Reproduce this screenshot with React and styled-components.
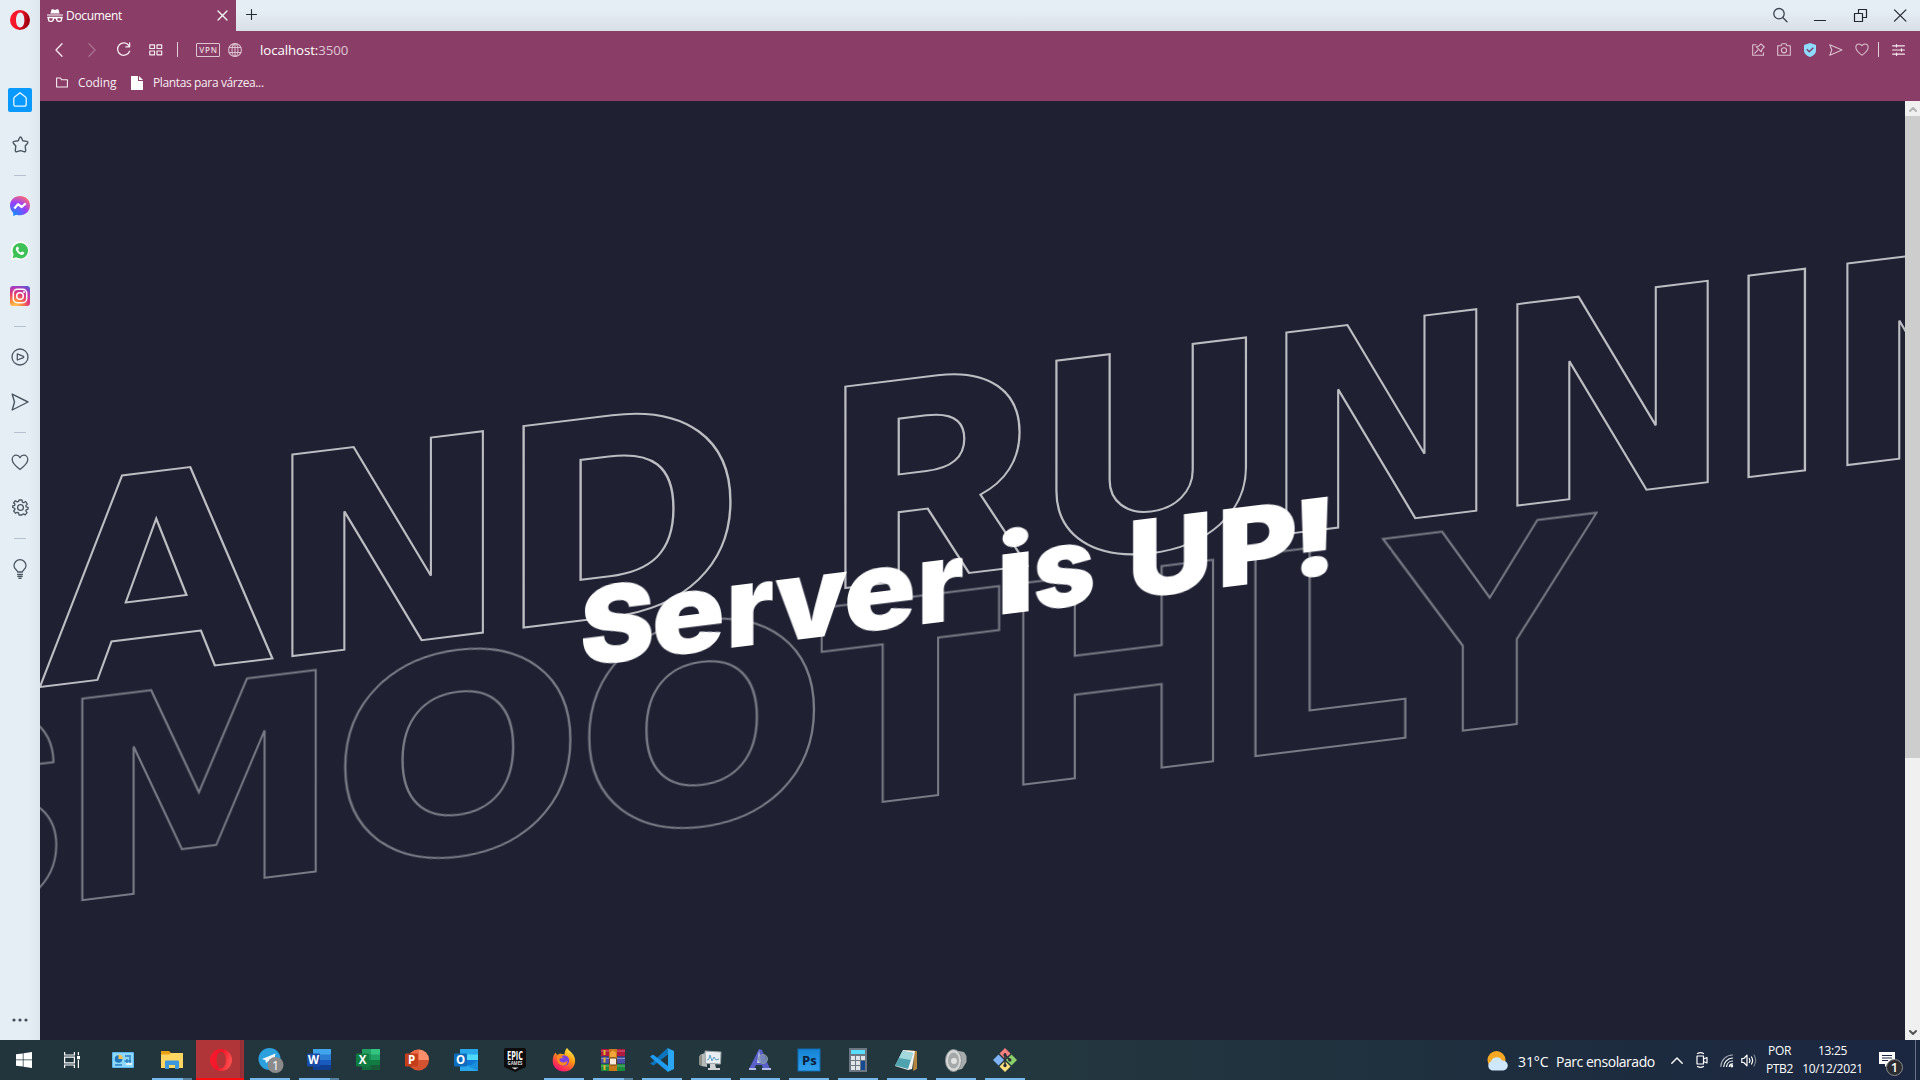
import React from "react";
import styled, { createGlobalStyle } from "styled-components";

const GlobalStyle = createGlobalStyle`
  * { box-sizing: border-box; }
  html, body { margin: 0; padding: 0; overflow: hidden; }
  body { font-family: "Open Sans", "Noto Sans", sans-serif; }
  svg { display: block; flex: none; overflow: visible; }
`;

/* ---------- shell ---------- */

const Desktop = styled.div`
  width: 1920px;
  height: 1080px;
  display: flex;
  flex-direction: column;
  overflow: hidden;
`;

const BrowserWindow = styled.div`
  height: 1040px;
  display: flex;
`;

const Sidebar = styled.nav`
  width: 40px;
  display: flex;
  flex-direction: column;
  align-items: center;
  background: linear-gradient(90deg, #e6eef5 70%, #dde5ed 100%);
`;

const SideItem = styled.div`
  width: 40px;
  height: ${(p) => p.$h || 45}px;
  display: flex;
  align-items: center;
  justify-content: center;
  flex: none;
`;

const HomeTile = styled.div`
  width: 24px;
  height: 24px;
  border-radius: 2px;
  background: #0a99ff;
  display: flex;
  align-items: center;
  justify-content: center;
`;

const SideRule = styled.div`
  width: 12px;
  height: 1px;
  flex: none;
  margin: 8px 0 7px;
  background: #b5c3d0;
`;

const Spacer = styled.div`
  flex: 1;
`;

const Main = styled.div`
  flex: 1;
  display: flex;
  flex-direction: column;
`;

/* ---------- tab strip ---------- */

const TabStrip = styled.div`
  height: 31px;
  display: flex;
  background: linear-gradient(180deg, #e6eef5 35%, #d8dfe7 100%);
`;

const Tab = styled.div`
  width: 196px;
  height: 31px;
  padding: 0 8px 0 7px;
  display: flex;
  align-items: center;
  background: #8a3d66;
  color: #fff;
  font-size: 12px;
  letter-spacing: -0.32px;
`;

const TabTitle = styled.span`
  flex: 1;
  margin-left: 3px;
  line-height: 31px;
`;

const NewTab = styled.div`
  width: 30px;
  height: 29px;
  display: flex;
  align-items: center;
  justify-content: center;
`;

const WindowButtons = styled.div`
  display: flex;
  margin-left: auto;
  padding-right: 0;
`;

const WindowButton = styled.div`
  width: 40px;
  height: 30px;
  display: flex;
  align-items: center;
  justify-content: center;
`;

/* ---------- toolbar ---------- */

const Toolbar = styled.div`
  height: 37px;
  display: flex;
  align-items: center;
  background: #8a3d66;
  color: #f5e9f0;
`;

const ToolButton = styled.div`
  width: ${(p) => p.$w || 26}px;
  height: 37px;
  display: flex;
  align-items: center;
  justify-content: center;
  opacity: ${(p) => (p.$dim ? 0.3 : 1)};
`;

const ToolRule = styled.div`
  width: 1px;
  height: 15px;
  background: #e3cfda;
`;

const VpnBadge = styled.div`
  width: 24px;
  height: 14px;
  margin-left: 13px;
  border: 1px solid #dcc4d1;
  border-radius: 1px;
  color: #e6d5de;
  font: 600 8px/12px "Open Sans", sans-serif;
  letter-spacing: 0.7px;
  text-align: center;
  padding-left: 1px;
`;

const Address = styled.div`
  margin-left: 10px;
  flex: 1;
  color: #fff;
  font-size: 13.3px;
  letter-spacing: -0.1px;
  line-height: 38px;
`;

const Port = styled.span`
  color: #dfc5d3;
`;

const Bookmarks = styled.div`
  height: 33px;
  padding-left: 16px;
  padding-bottom: 4px;
  display: flex;
  align-items: center;
  background: #8a3d66;
  color: #f6ecf1;
  font-size: 12px;
`;

const BookmarkLabel = styled.span`
  margin-left: 10px;
  width: ${(p) => p.$w}px;
  letter-spacing: ${(p) => p.$ls}px;
  white-space: nowrap;
`;

/* ---------- page ---------- */

const Viewport = styled.div`
  flex: 1;
  display: flex;
  min-height: 0;
`;

const Page = styled.main`
  position: relative;
  flex: 1;
  overflow: hidden;
  background: #1f2133;
`;

const SkewedLine = styled.div`
  position: absolute;
  left: ${(p) => p.$left}px;
  top: ${(p) => p.$baseline - 0.8637 * p.$size}px;
  margin: 0;
  font-family: Inter, sans-serif;
  font-size: ${(p) => p.$size}px;
  font-weight: 900;
  line-height: 1;
  letter-spacing: 0;
  font-kerning: none;
  white-space: nowrap;
  transform-origin: 0 0.8637em;
  transform: skewY(-7deg);
`;

const OutlineLine = styled(SkewedLine)`
  color: transparent;
  -webkit-text-stroke: 2px #ffffff;
  opacity: ${(p) => p.$opacity};
`;

const TitleLine = styled(SkewedLine)`
  color: #fff;
`;

const LetterBox = styled.span`
  display: inline-block;
  white-space: pre;
`;

const faces = {
  black: { family: "Inter", weight: 900, cap: 0.7273, base: 0.8637 },
  heavy: { family: "Inter", weight: 850, cap: 0.7273, base: 0.8637 },
  extra: { family: "Inter", weight: 800, cap: 0.7273, base: 0.8637 },
  dejavu: { family: "DejaVu Sans", weight: 700, cap: 0.729, base: 0.846 },
};

const LetterInk = styled.span`
  display: inline-block;
  font-family: "${(p) => p.$face.family}", sans-serif;
  font-weight: ${(p) => p.$face.weight};
  font-size: ${(p) => 0.7273 / p.$face.cap}em;
  transform-origin: 0 ${(p) => p.$face.base}em;
`;

const ScrollTrack = styled.div`
  width: 15px;
  display: flex;
  flex-direction: column;
  background: #f0f0f0;
`;

const ScrollArrow = styled.div`
  height: 15px;
  display: flex;
  align-items: center;
  justify-content: center;
`;

const ScrollThumb = styled.div`
  height: 642px;
  background: #cdcdcd;
`;

/* ---------- taskbar ---------- */

const Taskbar = styled.footer`
  height: 40px;
  display: flex;
  background: linear-gradient(90deg, #22353d 0%, #23373f 55%, #1e2e3e 78%, #1b2641 100%);
  color: #fff;
`;

const TaskCell = styled.div`
  width: ${(p) => (p.$name === "start" ? 47 : 49)}px;
  margin-right: ${(p) => (p.$name === "view" ? 2 : 0)}px;
  height: 40px;
  display: flex;
  flex-direction: column;
  align-items: center;
  background: ${(p) => (p.$active ? "linear-gradient(90deg, #b03539 44px, #8f2f36 44px, #9c3137 48px, transparent 48px)" : "none")};
`;

const TaskIcon = styled.div`
  height: 38px;
  padding-top: 2px;
  display: flex;
  align-items: center;
`;

const Underline = styled.div`
  height: 2px;
  width: ${(p) => (p.$kind === "active" ? 48 : 40)}px;
  margin-left: ${(p) => (p.$kind === "active" ? -1 : 0)}px;
  background: ${(p) =>
    p.$kind === "active"
      ? "#f90b10"
      : p.$kind === "multi"
      ? "linear-gradient(90deg, #76b9ed 31px, #55819f 31px)"
      : p.$kind === "open"
      ? "#76b9ed"
      : "none"};
`;

const Tray = styled.div`
  margin-left: auto;
  display: flex;
  align-items: center;
  font-size: 14px;
`;

const Weather = styled.div`
  display: flex;
  align-items: center;
  height: 40px;
  padding-top: 2px;
  width: 177px;
  letter-spacing: -0.46px;
`;

const Degrees = styled.span`
  width: 38px;
  margin-left: 10px;
  letter-spacing: -0.1px;
`;

const TrayIcon = styled.div`
  width: ${(p) => p.$w}px;
  display: flex;
  justify-content: center;
`;

const TrayStack = styled.div`
  width: ${(p) => p.$w}px;
  display: flex;
  flex-direction: column;
  align-items: center;
  font-size: 12px;
  line-height: 18px;
  letter-spacing: ${(p) => p.$ls || 0}px;
  white-space: nowrap;
`;

const Notice = styled.div`
  position: relative;
  width: 50px;
  height: 40px;
  padding: 12px 0 0 14px;
`;

const NoticeCount = styled.div`
  position: absolute;
  left: 21px;
  top: 19px;
  width: 17px;
  height: 17px;
  border-radius: 50%;
  border: 1px solid #8a8c90;
  background: #2b2c30;
  font-size: 13px;
  font-weight: 600;
  line-height: 15px;
  text-align: center;
`;

const PeekEdge = styled.div`
  width: 5px;
  height: 40px;
  border-left: 1px solid #6b7487;
`;

/* ---------- fitted lettering ---------- */

const pen = document.createElement("canvas").getContext("2d");

function inkOf(char, size, face) {
  const px = (size * 0.7273) / face.cap;
  pen.font = `${face.weight} ${px}px "${face.family}"`;
  const m = pen.measureText(char);
  return { left: -m.actualBoundingBoxLeft, width: m.actualBoundingBoxRight + m.actualBoundingBoxLeft };
}

function Letters({ items, size, start, bleed = 0 }) {
  let cursor = start;
  return items.map(([char, from, to, stretch = 1, faceName = "black"], i) => {
    const gap = from - cursor;
    const width = to - from;
    cursor = to;
    if (char === " ") {
      return <LetterBox key={i} style={{ width, marginLeft: gap }}> </LetterBox>;
    }
    const face = faces[faceName];
    const ink = inkOf(char, size, face);
    const sx = (width + 2 * bleed) / ink.width;
    return (
      <LetterBox key={i} style={{ width, marginLeft: gap }}>
        <LetterInk $face={face} style={{ transform: `translateX(${-ink.left * sx - bleed}px) scale(${sx}, ${stretch})` }}>{char}</LetterInk>
      </LetterBox>
    );
  });
}

const RUNNING = [
  ["A", 40, 274.5, 1, "dejavu"], ["N", 289.8, 482.5, 1, "dejavu"], ["D", 522.4, 731, 1, "extra"], [" ", 731, 844.2],
  ["R", 844.2, 1029.5, 1, "heavy"], ["U", 1055.4, 1245.2, 1, "heavy"], ["N", 1283.8, 1475.9, 1, "dejavu"],
  ["N", 1515.4, 1707.9, 1, "dejavu"], ["I", 1747.4, 1805.5, 1, "extra"], ["N", 1845.4, 2037.8, 1, "dejavu"], ["G", 2068, 2270, 1, "extra"],
];

const SMOOTHLY = [
  ["S", -112, 54.7, 1, "extra"], ["M", 80, 315.1, 1, "dejavu"], ["O", 344, 569.4, 1, "extra"], ["O", 588, 813, 1, "extra"],
  ["T", 820.2, 1001.3, 1, "black"], ["H", 1021.7, 1214.6, 1, "heavy"], ["L", 1254.3, 1408.3, 1, "heavy"], ["Y", 1383.5, 1595.6, 1, "dejavu"],
];

const TITLE = [
  ["S", 583, 652], ["e", 655.4, 722.8, 1.05], ["r", 730.9, 773.3, 1.05], ["v", 774.8, 847.2, 1.05],
  ["e", 847.2, 913.6, 1.05], ["r", 922.2, 963.6, 1.05], [" ", 963.6, 1001.8],
  ["i", 1001.8, 1028.9, 1.02], ["s", 1035, 1093.2, 1.05], [" ", 1093.2, 1133.5],
  ["U", 1133.5, 1208], ["P", 1222.8, 1294.7], ["!", 1300.8, 1327.9],
];

/* ---------- line icons ---------- */

function Line({ w = 16, h = w, sw = 1.2, color = "currentColor", children, vb }) {
  return (
    <svg width={w} height={h} viewBox={vb || `0 0 ${w} ${h}`} fill="none" stroke={color} strokeWidth={sw} strokeLinecap="round" strokeLinejoin="round">
      {children}
    </svg>
  );
}

const INK = "#4b5661";
const heart = "M9 15.5 C7 14 1.2 9.8 1.2 5.6 C1.2 3 3 1.2 5.2 1.2 C6.9 1.2 8.2 2.1 9 3.6 C9.8 2.1 11.1 1.2 12.8 1.2 C15 1.2 16.8 3 16.8 5.6 C16.8 9.8 11 14 9 15.5 Z";

const OperaO = ({ size }) => (
  <svg width={size} height={size} viewBox="0 0 20 20">
    <defs>
      <linearGradient id={`op${size}`} x1="0" x2="1" y1="0" y2="0.3">
        <stop offset="0" stopColor="#ff1b2d" />
        <stop offset="0.55" stopColor="#f0152a" />
        <stop offset="1" stopColor={size > 20 ? "#ff4a4a" : "#a0000f"} />
      </linearGradient>
    </defs>
    <path fillRule="evenodd" fill={`url(#op${size})`} d="M10 0a10 10 0 1 0 0 20a10 10 0 0 0 0-20ZM10.2 2.6c2.6 0 4.200 3.300 4.200 7.400s-1.600 7.400-4.200 7.400S6 14.100 6 10s1.600-7.400 4.200-7.400Z" />
  </svg>
);

const Gear = () => (
  <Line w={17} sw={1.3} color={INK}>
    <path d="M7 1h3l.4 2.100 1.300.6 1.900-1.200 1.700 2.600-1.400 1.500.2 1.200 2 .5v1.800l-2 .8-.3 1 1.300 1.700-1.900 2.300-1.700-1-1.300.6L10 16H7l-.4-2.100-1.300-.6-1.700 1-1.900-2.300L3 10.300l-.3-1-2-.8V6.800l2-.5.2-1.200L1.600 4l1.700-2.300 2 1.200 1.300-.6Z" />
    <circle cx="8.500" cy="8.500" r="2.900" />
  </Line>
);

function SideBar() {
  return (
    <Sidebar>
      <SideItem $h={40}><OperaO size={20} /></SideItem>
      <SideItem $h={37} />
      <SideItem>
        <HomeTile>
          <Line w={14} h={15} sw={1.3} color="#e9f6ff"><path d="M7 .8 L12.400 5 Q13.200 5.700 13.200 6.800 V12.200 Q13.200 14.200 11.200 14.200 H2.800 Q.8 14.200 .8 12.200 V6.800 Q.8 5.700 1.600 5 Z" /></Line>
        </HomeTile>
      </SideItem>
      <SideItem>
        <Line w={17} h={17} sw={1.4} color={INK}><path d="M8.500 1 Q9.300 1 9.600 2 L10.800 4.800 L14.800 5.400 Q16.500 5.900 15.600 7.200 L13.200 10 L13.700 14.500 Q13.600 16.200 12 15.600 L8.500 14.600 L5 15.600 Q3.400 16.200 3.300 14.500 L3.800 10 L1.400 7.200 Q.5 5.900 2.200 5.400 L6.200 4.800 L7.400 2 Q7.700 1 8.500 1 Z" /></Line>
      </SideItem>
      <SideRule />
      <SideItem>
        <svg width="20" height="20" viewBox="0 0 20 20">
          <defs><radialGradient id="ms" cx="0.2" cy="1" r="1.100"><stop offset="0" stopColor="#0a90ff" /><stop offset="0.6" stopColor="#9540ff" /><stop offset="1" stopColor="#ff6a70" /></radialGradient></defs>
          <path fill="url(#ms)" d="M10 0C4.400 0 0 4 0 9.600c0 2.900 1.200 5.400 3.200 7.100V20l3.200-1.300c1.100.4 2.300.6 3.600.6 5.600 0 10-4.100 10-9.700S15.600 0 10 0Z" />
          <path d="M4.300 12.500 L8 8.200 L11.700 11 L15.700 7.400" stroke="#fff" strokeWidth="2.200" fill="none" strokeLinejoin="round" />
        </svg>
      </SideItem>
      <SideItem>
        <svg width="20" height="20" viewBox="0 0 20 20">
          <path fill="#fff" d="M10.300.6A9.100 9.100 0 0 0 2.400 14.500L.8 19l4.800-1.200A9.100 9.100 0 1 0 10.300.6Z" />
          <path fill="#3ec156" d="M10.300 2A7.700 7.700 0 0 0 3.600 13.500l-1 3.700 3.600-1A7.700 7.700 0 1 0 10.300 2Z" />
          <path d="M7 5.700c1-.7 1.600.9 1.900 1.800.1.500-.8 1.100-.7 1.400.5 1.200 1.500 2.100 2.700 2.700.4.100.9-1.100 1.400-1 .8.400 2.200.8 2 1.500-.5 1.800-2.300 2.100-3.700 1.600A8 8 0 0 1 6.100 9.300c-.5-1.200-.3-2.700.9-3.600Z" fill="#fff" />
        </svg>
      </SideItem>
      <SideItem>
        <svg width="20" height="20" viewBox="0 0 20 20">
          <defs><radialGradient id="ig" cx="0.25" cy="1.050" r="1.150"><stop offset="0" stopColor="#ffd35c" /><stop offset="0.3" stopColor="#fb8a3c" /><stop offset="0.6" stopColor="#e23a75" /><stop offset="0.85" stopColor="#b03bb8" /><stop offset="1" stopColor="#6454d0" /></radialGradient></defs>
          <rect width="20" height="20" rx="3" fill="url(#ig)" />
          <rect x="3.300" y="3.300" width="13.400" height="13.400" rx="4" fill="none" stroke="#fff" strokeWidth="1.500" />
          <circle cx="10" cy="10" r="3.300" fill="none" stroke="#fff" strokeWidth="1.500" />
          <circle cx="14" cy="6" r="1" fill="#fff" />
        </svg>
      </SideItem>
      <SideRule />
      <SideItem>
        <Line w={18} sw={1.3} color={INK}><circle cx="9" cy="9" r="8" /><path d="M6.300 5.900 V12 L12.500 9.700 Q13 9 12.500 8.300 Z" /></Line>
      </SideItem>
      <SideItem>
        <Line w={18} sw={1.4} color={INK}><path d="M1.200 1.200 L17 9 L1.200 17 L3.500 9 Z" /></Line>
      </SideItem>
      <SideRule />
      <SideItem><Line w={18} h={17} sw={1.3} color={INK}><path d={heart} /></Line></SideItem>
      <SideItem><Gear /></SideItem>
      <SideRule />
      <SideItem>
        <Line w={14} h={20} sw={1.3} color={INK}><path d="M4.600 13 C4.600 10.800 1 10.300 1 6.700 A6 6 0 0 1 13 6.700 C13 10.300 9.400 10.800 9.400 13 Z M4.600 15.500 H9.400 M4.900 17.500 H9.100 M6 19.300 H8" /></Line>
      </SideItem>
      <Spacer />
      <SideItem $h={40}>
        <svg width="16" height="4" fill="#454e58"><circle cx="2" cy="2" r="1.600" /><circle cx="8" cy="2" r="1.600" /><circle cx="14" cy="2" r="1.600" /></svg>
      </SideItem>
    </Sidebar>
  );
}

function Tabs() {
  return (
    <TabStrip>
      <Tab>
        <svg width="16" height="14" viewBox="0 0 16 14" fill="#fff">
          <path d="M4.500.5Q5 0 6 .3L8 .9 10 .3Q11 0 11.500.5L12.600 4.600H3.400Z M0 5.400H16V6.600H0Z" />
          <path d="M1.500 8.500H6.300V10.600Q6 12.400 4.200 12.400H3.400Q1.700 12.400 1.500 10.600ZM9.700 8.500H14.500V10.600Q14.300 12.400 12.600 12.400H11.800Q10 12.400 9.700 10.600ZM6.300 9H9.700M.3 8.500H15.700" fill="none" stroke="#fff" strokeWidth="1.400" />
        </svg>
        <TabTitle>Document</TabTitle>
        <Line w={11} sw={1.2} color="#fff"><path d="M1 1 L10 10 M10 1 L1 10" /></Line>
      </Tab>
      <NewTab><Line w={11} sw={1.100} color="#222a33"><path d="M5.500 .5 V10.500 M.5 5.500 H10.500" /></Line></NewTab>
      <WindowButtons>
        <WindowButton><Line w={15} sw={1.300} color="#3b434c"><circle cx="6" cy="5.700" r="5.200" /><path d="M9.800 9.500 L14 13.700" /></Line></WindowButton>
        <WindowButton><Line w={12} sw={1.200} color="#22282e"><path d="M.5 11.500 H11.500" /></Line></WindowButton>
        <WindowButton><Line w={13} sw={1.200} color="#22282e"><path d="M.5 4.500 H8.500 V12.500 H.5 Z M4.500 4.500 V.5 H12.500 V8.500 H8.500" /></Line></WindowButton>
        <WindowButton><Line w={13} sw={1.200} color="#22282e"><path d="M.5 .8 L11.900 12.200 M11.900 .8 L.5 12.200" /></Line></WindowButton>
      </WindowButtons>
    </TabStrip>
  );
}

function Tools() {
  const soft = "#dcc0cf";
  return (
    <>
      <Toolbar>
        <ToolButton $w={37}><Line w={8} h={14} sw={1.300}><path d="M7 .8 L1 7 L7 13.200" /></Line></ToolButton>
        <ToolButton $w={29} $dim><Line w={8} h={14} sw={1.300}><path d="M1 .8 L7 7 L1 13.200" /></Line></ToolButton>
        <ToolButton $w={35}><Line w={15} sw={1.300}><path d="M13 3.800 A6.200 6.200 0 1 0 13.600 9.200 M13.600 1 V4.800 H9.800" /></Line></ToolButton>
        <ToolButton $w={30}><Line w={14} h={12} sw={1.200}><path d="M.8 .8H5.500V4.500H.8ZM8 .8H12.700V4.500H8ZM.8 7H5.500V10.800H.8ZM8 7H12.700V10.800H8Z" /></Line></ToolButton>
        <ToolButton $w={12}><ToolRule /></ToolButton>
        <VpnBadge>VPN</VpnBadge>
        <ToolButton $w={30}>
          <Line w={14} sw={1.100} color={soft}><circle cx="7" cy="7" r="6.400" /><ellipse cx="7" cy="7" rx="3" ry="6.400" /><path d="M7 .6V13.400M1.200 4.500H12.800M1.200 9.500H12.800" /></Line>
        </ToolButton>
        <Address>localhost:<Port>3500</Port></Address>
        <ToolButton>
          <Line w={13} sw={1.100} color={soft}><path d="M4 1.700 H.7 V12.300 H11.500 V9.800 M2.800 10.200 L5.800 7.200 M9 .8 L12.200 4 L10 6.200 L9.300 8.800 L4.200 3.700 L6.800 3 Z" /></Line>
        </ToolButton>
        <ToolButton>
          <Line w={14} h={13} sw={1.100} color={soft}><path d="M.7 2.700H4L5 .7H9L10 2.700H13.300V12.300H.7Z" /><circle cx="7" cy="7.300" r="2.600" /></Line>
        </ToolButton>
        <ToolButton>
          <svg width="12" height="14" viewBox="0 0 12 14"><path fill="#8fdcff" d="M6 0 L12 2 V8 Q11.500 12 6 14 Q.5 12 0 8 V2 Z" /><path d="M2.800 6.300 L5.300 8.700 L9.300 4.800" stroke="#7a3f6c" strokeWidth="1.500" fill="none" /></svg>
        </ToolButton>
        <ToolButton><Line w={14} h={12} sw={1.100} color={soft}><path d="M.8 .8 L13 6 L.8 11.200 L2.800 6 Z" /></Line></ToolButton>
        <ToolButton><Line w={14} h={13} sw={1.300} vb="1 0 16 16.500" color={soft}><path d={heart} /></Line></ToolButton>
        <ToolButton $w={6}><ToolRule /></ToolButton>
        <ToolButton $w={35}><Line w={13} h={12} sw={1.200}><path d="M.6 1.800H12.400M.6 6H12.400M.6 10.200H12.400M4.500 .6V3M9.500 4.800V7.200M4.500 9V11.400" /></Line></ToolButton>
        <ToolButton $w={4} />
      </Toolbar>
      <Bookmarks>
        <Line w={12} h={11} sw={1.100}><path d="M.6 1H4.500L5.600 2.700H11.400V10H.6Z" /></Line>
        <BookmarkLabel $w={53} $ls={-0.12}>Coding</BookmarkLabel>
        <svg width="12" height="14" viewBox="0 0 12 14" fill="#fff"><path d="M0 0H7V5H12V14H0ZM8 0L12 4H8Z" /></svg>
        <BookmarkLabel $w={130} $ls={-0.37}>Plantas para várzea...</BookmarkLabel>
      </Bookmarks>
    </>
  );
}

/* ---------- taskbar icons ---------- */

const Office = ({ letter, dark, tones, round, mail }) => (
  <svg width="24" height="22" viewBox="0 0 24 22">
    {round ? (
      <>
        <circle cx="13.500" cy="11" r="10.500" fill={tones[2]} />
        <path d="M13.500 .5 A10.500 10.500 0 0 1 24 11 H13.500Z" fill={tones[0]} />
        <path d="M13.500 .5 A10.500 10.500 0 0 0 3 11 H13.500Z" fill={tones[1]} />
      </>
    ) : (
      <>
        <rect x="6" y="0" width="18" height="6" fill={tones[0]} />
        <rect x="6" y="5.500" width="18" height="6" fill={tones[1]} />
        <rect x="6" y="11" width="18" height="5.500" fill={tones[2]} />
        <rect x="6" y="16" width="18" height="5" fill={tones[3]} />
        {!mail && letter === "X" && <rect x="6" y="0" width="9" height="21" fill={tones[2]} opacity="0.5" />}
        {mail && <path d="M6 13 L15 18 L24 11 V22 H6Z" fill="#1b8fdc" />}
        {mail && <path d="M6 13 L24 22 H6Z" fill="#28a8ea" />}
      </>
    )}
    <rect x="0" y="4.500" width="13" height="13" rx="1" fill={dark} />
    <text x="6.500" y="15" textAnchor="middle" fontFamily="Open Sans, sans-serif" fontWeight="700" fontSize="11.500" fill="#fff">{letter}</text>
  </svg>
);

const icons = {
  start: <svg width="16" height="16" viewBox="0 0 16 16" fill="#fff"><path d="M0 2.300L6.800 1.400V7.600H0ZM7.500 1.300L16 0V7.600H7.500ZM0 8.300H6.800V14.600L0 13.700ZM7.500 8.300H16V16L7.500 14.700Z" /></svg>,
  view: <svg width="16" height="16" viewBox="0 0 16 16" fill="none" stroke="#fff" strokeWidth="1.200"><path d="M.6 0V3H10.400V0M.6 16V13H10.400V16M.6 5.200H10.400V10.800H.6ZM14.400 0V3.300M14.400 8V16" /><path d="M13 4H16V7.200H13Z" fill="#fff" stroke="none" /></svg>,
  panel: <svg width="22" height="16" viewBox="0 0 22 16"><rect width="22" height="16" rx="1" fill="#58b9f2" /><rect x="1" y="1" width="20" height="14" fill="#8fd8fb" /><circle cx="6.500" cy="7" r="3.800" fill="#1f77bd" /><path d="M6.500 7V2.500A4.400 4.400 0 0 1 11 7Z" fill="#f5c154" /><path d="M13 4H19M15 7V11M18 5V11M12.500 9H19M3 13H10" stroke="#2a7fbd" strokeWidth="1.400" /><path d="M14 12H20" stroke="#fff" strokeWidth="1.500" /></svg>,
  folder: <svg width="22" height="18" viewBox="0 0 22 18"><path d="M0 0H8L10 2H22V17H0Z" fill="#e6a117" /><path d="M0 3.500H8L10 2H22V17H0Z" fill="#ffd661" /><path d="M4 18V10.500Q4 9.500 5 9.500H17Q18 9.500 18 10.500V18H14V14H8V18Z" fill="#3c98de" /></svg>,
  opera: <OperaO size={22} />,
  telegram: <svg width="25" height="25" viewBox="-1.500 0 25 25"><circle cx="11" cy="11" r="11" fill="#2ca0dc" /><path d="M3.500 11L17 5.500L14.700 16.500L10 13L7.500 15L7 12.300Z" fill="#f2f8fc" /><circle cx="17" cy="17" r="8" fill="#8b8b8b" /><text x="17" y="21.500" textAnchor="middle" fontFamily="Open Sans, sans-serif" fontSize="12.500" fill="#fff">1</text></svg>,
  word: <Office letter="W" dark="#184aa8" tones={["#41a5ee", "#2b7cd3", "#185abd", "#103f91"]} />,
  excel: <Office letter="X" dark="#107c41" tones={["#33c481", "#21a366", "#107c41", "#185c37"]} />,
  ppt: <Office letter="P" dark="#c43e1c" tones={["#ff8f6b", "#ed6c47", "#d35230"]} round />,
  outlook: <Office letter="O" dark="#0f6cbd" tones={["#28a8ea", "#50d9ff", "#0f78d4", "#1490df"]} mail />,
  epic: <svg width="22" height="24" viewBox="0 0 22 24"><path d="M2 0H20Q22 0 22 2V19L11 24L0 19V2Q0 0 2 0Z" fill="#0c0c0c" /><text x="11" y="11.500" textAnchor="middle" textLength="16" lengthAdjust="spacingAndGlyphs" fontFamily="Open Sans, sans-serif" fontWeight="700" fontSize="12.500" fill="#fff">EPIC</text><text x="11" y="17" textAnchor="middle" textLength="15" lengthAdjust="spacingAndGlyphs" fontFamily="Open Sans, sans-serif" fontWeight="700" fontSize="4.500" fill="#ddd">GAMES</text><path d="M7.500 19.500H14.500L11 21.500Z" fill="#ddd" /></svg>,
  firefox: <svg width="24" height="24" viewBox="0 0 24 24"><defs><linearGradient id="ff" x1="0.8" y1="0" x2="0.2" y2="1"><stop offset="0" stopColor="#fff04f" /><stop offset="0.4" stopColor="#ff980e" /><stop offset="0.75" stopColor="#ff3750" /><stop offset="1" stopColor="#eb0878" /></linearGradient></defs><path d="M15 0C17 3 22 5 23 11C24 18 19 23.500 12 23.500C5 23.500 .5 18.500 .7 12.500C.8 9 2 6 3.500 4.500L5 7L8 5.500L12.500 6.500C12.500 4 13.500 1.500 15 0Z" fill="url(#ff)" /><circle cx="12" cy="12.500" r="5.200" fill="#7b42e0" /><path d="M5 8.500Q8 7 11.500 9.300Q9.500 10.500 7.500 10.500Q7 14 10.500 14.500Q14 15 15.500 12.500Q15 18 10.500 17.500Q4.500 16.500 5 8.500Z" fill="#ff8a1e" /></svg>,
  rar: <svg width="24" height="22" viewBox="0 0 24 22"><rect width="24" height="7" fill="#b3193c" /><rect y="7.500" width="24" height="7" fill="#4a4fa8" /><rect y="15" width="24" height="7" fill="#1c8a3d" /><path d="M0 2H24M0 9.500H24M0 17H24" stroke="#fff" strokeOpacity="0.35" /><path d="M3.500 1V6M3.500 8.500V13.500M3.500 16V21" stroke="#e0b52e" strokeWidth="2" /><rect x="8" y="0" width="8" height="22" fill="#c87a1a" /><rect x="8.500" y="9" width="7" height="7" rx="1" fill="#f3ead7" stroke="#6b4012" /><path d="M9 4Q12 -1 15 4V8H9Z" fill="#f0a63a" /></svg>,
  code: <svg width="24" height="24" viewBox="0 0 24 24"><path d="M17.500 0L2.500 14L0 15.500L3.500 17.500L18 6.500Z" fill="#0c74bd" /><path d="M0 8.500L3 6.500L18 18V24L2 10.500Z" fill="#1f9cf0" /><path d="M17.500 0L24 3V21L17.500 24L18 18V6Z" fill="#2aa6f5" /></svg>,
  monitor: <svg width="23" height="22" viewBox="0 0 23 22"><path d="M1 6L8 3V18L2 17Z" fill="#b8bcb8" /><path d="M0 7L3 6V17L0 16Z" fill="#8a9088" /><path d="M6 2L22 3L21.500 15L6.500 14.500Z" fill="#e8eef2" stroke="#9aa2a6" /><path d="M8 11L10 10L11 6L13 12L15 8L17 11L20 10" stroke="#5f9fc8" strokeWidth="1" fill="none" /><path d="M11 15H16L17 19H21V21H9V19H11Z" fill="#cfd3d5" /></svg>,
  aida: <svg width="22" height="22" viewBox="0 0 22 22"><path d="M10 0L13 1L21 20H14L13 16H7L5 20H0Z" fill="#5961c9" /><path d="M10 1L12 14H8Z" fill="#c4c8f4" /><circle cx="14" cy="10" r="4.500" fill="#7d93b4" fillOpacity="0.75" stroke="#8c99a6" /><path d="M0 19H7V21H0ZM13 19H22V21H13Z" fill="#b5bbef" /></svg>,
  ps: <svg width="22" height="22" viewBox="0 0 22 22"><defs><linearGradient id="pp" x1="0" y1="0" x2="0" y2="1"><stop offset="0" stopColor="#1583d4" /><stop offset="1" stopColor="#31a0ee" /></linearGradient></defs><rect width="22" height="22" fill="url(#pp)" stroke="#0f6cb3" /><text x="11.300" y="16" textAnchor="middle" fontFamily="Open Sans, sans-serif" fontWeight="700" fontSize="13" fill="#0b2036">Ps</text></svg>,
  calc: <svg width="18" height="24" viewBox="0 0 18 24"><rect width="18" height="24" fill="#6c7783" /><rect x="2" y="2" width="14" height="4" fill="#58dcfb" /><path d="M2 8H6V12H2ZM7 8H11V12H7ZM12 8H16V12H12ZM2 13H6V17H2ZM7 13H11V17H7ZM2 18H6V22H2ZM7 18H11V22H7Z" fill="#dfe4e8" /><rect x="12" y="13" width="4" height="9" fill="#154a93" /></svg>,
  note: <svg width="23" height="22" viewBox="0 0 23 22"><path d="M8 1L22 2V20L18 22L19 4Z" fill="#b48540" /><path d="M8 1L20 2L17 20L13 21L0 17Z" fill="#f1f4f2" /><path d="M7.500 2L18 4L13 20L0 16.500Z" fill="#4fa3ae" /><path d="M7.500 2L18 4L16 11L4 9Z" fill="#a3d9dc" /></svg>,
  speaker: <svg width="22" height="23" viewBox="0 0 22 23"><path d="M9 1L19 3L21.500 7V13L17 20L8 22Z" fill="#a9acac" /><ellipse cx="8.500" cy="11.500" rx="8" ry="11" fill="#d6d8d8" stroke="#8e9394" /><ellipse cx="8.500" cy="11.500" rx="5.500" ry="8" fill="#a4a8a9" /><circle cx="9" cy="12" r="3" fill="#e1e3e3" /></svg>,
  git: <svg width="24" height="24" viewBox="0 0 24 24"><path d="M12 0L17.500 5.500L12 11L6.500 5.500Z" fill="#f47f7f" /><path d="M5.500 6.500L11 12L5.500 17.500L0 12Z" fill="#80b3f5" /><path d="M18.500 6.500L24 12L18.500 17.500L13 12Z" fill="#8bd06a" /><path d="M12 13L17.500 18.500L12 24L6.500 18.500Z" fill="#ffe07d" /><path d="M12 5V18M12 7L17 12" stroke="#272f36" strokeWidth="1.500" /><circle cx="12" cy="17.500" r="1.700" fill="#272f36" /><circle cx="16.800" cy="12" r="1.700" fill="#272f36" /><circle cx="12" cy="7" r="1.600" fill="#272f36" /></svg>,
};

const TASKS = [
  ["start"], ["view"], ["panel"], ["folder", "multi"], ["opera", "active"], ["telegram", "open"], ["word", "multi"],
  ["excel"], ["ppt"], ["outlook"], ["epic"], ["firefox", "open"], ["rar", "multi"], ["code", "open"], ["monitor", "open"],
  ["aida", "open"], ["ps", "open"], ["calc", "open"], ["note", "open"], ["speaker", "open"], ["git", "open"],
];

function SystemTray() {
  return (
    <Tray>
      <Weather>
        <svg width="21" height="20" viewBox="0 0 21 20">
          <circle cx="9.500" cy="9" r="9" fill="#f7a823" />
          <path d="M5 19.500A4.800 4.800 0 0 1 4 10.500A6 6 0 0 1 15 9.500A5 5 0 0 1 16.500 19.500Z" fill="#cfe7fa" />
        </svg>
        <Degrees>31°C</Degrees>
        <span>Parc ensolarado</span>
      </Weather>
      <TrayIcon $w={26}><Line w={12} h={7} sw={1.400}><path d="M.8 6.200L6 1L11.200 6.200" /></Line></TrayIcon>
      <TrayIcon $w={24}><Line w={12} h={16} sw={1.200}><path d="M1 4H7.500V12H1ZM7.500 7L11 5.500V11L7.500 9.500M1.500 1.500Q4.500 -.2 7.500 1.500M1.500 14.500Q4.500 16.200 7.500 14.500" /></Line></TrayIcon>
      <TrayIcon $w={25}>
        <Line w={13} sw={1.200}><path d="M.8 12.500A12 12 0 0 1 12.500 1" opacity=".6" /><path d="M3.800 12.500A9 9 0 0 1 12.500 4M6.600 12.500A6 6 0 0 1 12.500 7M9.300 12.500A3.200 3.200 0 0 1 12.500 9.800" /><circle cx="11.800" cy="12" r=".8" fill="#fff" /></Line>
      </TrayIcon>
      <TrayIcon $w={20}><Line w={16} h={13} sw={1.200}><path d="M.8 4.500H2.800L6 1.200V11.800L2.800 8.500H.8ZM8.300 4.500Q9.500 6.500 8.300 8.500M10.500 3Q12.700 6.500 10.500 10" /><path d="M13 1Q16.300 6.500 13 12" opacity=".4" /></Line></TrayIcon>
      <TrayStack $w={41} $ls={-0.3}><span>POR</span><span>PTB2</span></TrayStack>
      <TrayStack $w={65} $ls={-0.3}><span>13:25</span><span>10/12/2021</span></TrayStack>
      <Notice>
        <svg width="16" height="16" viewBox="0 0 16 16"><path d="M0 0H16V12H9L6 15V12H0Z" fill="#fff" /><path d="M3 3.500H13M3 6H13M3 8.500H9" stroke="#1b2641" /></svg>
        <NoticeCount>1</NoticeCount>
      </Notice>
      <PeekEdge />
    </Tray>
  );
}

export default function App() {
  return (
    <Desktop>
      <GlobalStyle />
      <BrowserWindow>
        <SideBar />
        <Main>
          <Tabs />
          <Tools />
          <Viewport>
            <Page>
              <OutlineLine $left={0} $baseline={585.9} $size={277} $opacity={0.7}>
                <Letters items={RUNNING} size={277} start={40} bleed={1.6} />
              </OutlineLine>
              <OutlineLine $left={-152} $baseline={822.9} $size={277} $opacity={0.4}>
                <Letters items={SMOOTHLY} size={277} start={-112} bleed={1.6} />
              </OutlineLine>
              <TitleLine as="h1" $left={543} $baseline={566.5} $size={107.7}>
                <Letters items={TITLE} size={107.7} start={583} />
              </TitleLine>
            </Page>
            <ScrollTrack>
              <ScrollArrow><Line w={8} h={6} sw={2} color="#b3b3b3"><path d="M1 5L4 2L7 5" /></Line></ScrollArrow>
              <ScrollThumb />
              <Spacer />
              <ScrollArrow><Line w={8} h={6} sw={2} color="#555"><path d="M1 1L4 4L7 1" /></Line></ScrollArrow>
            </ScrollTrack>
          </Viewport>
        </Main>
      </BrowserWindow>
      <Taskbar>
        {TASKS.map(([name, kind]) => (
          <TaskCell key={name} $name={name} $active={kind === "active"}>
            <TaskIcon>{icons[name]}</TaskIcon>
            <Underline $kind={kind} />
          </TaskCell>
        ))}
        <SystemTray />
      </Taskbar>
    </Desktop>
  );
}
